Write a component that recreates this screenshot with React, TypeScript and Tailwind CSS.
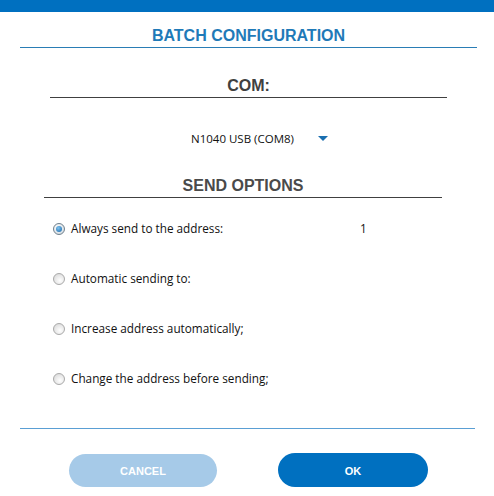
import React from "react";

const options = [
  { label: "Always send to the address:", checked: true, value: "1" },
  { label: "Automatic sending to:", checked: false },
  { label: "Increase address automatically;", checked: false },
  { label: "Change the address before sending;", checked: false },
];

function Radio({ checked }: { checked: boolean }) {
  if (checked) {
    return (
      <span className="flex h-[12px] w-[12px] items-center justify-center rounded-full border border-[#6f7f8c] bg-[radial-gradient(circle_at_40%_35%,#ffffff,#c9d3da)]">
        <span className="h-[6px] w-[6px] rounded-full bg-[radial-gradient(circle_at_40%_35%,#7fc3f0,#1565a8)]" />
      </span>
    );
  }
  return (
    <span className="h-[12px] w-[12px] rounded-full border border-[#a9a9a9] bg-[radial-gradient(circle_at_60%_65%,#ffffff,#d4d4d4)]" />
  );
}

export default function App() {
  return (
    <div className="flex h-[496px] w-[494px] flex-col bg-white font-['Liberation_Sans',Arial,sans-serif]">
      <div className="h-[12px] bg-[#0070c0]" />

      <div className="ml-[20px] mr-[17px] mt-[15px] border-b border-[#2a7db5] pb-[2px] text-center text-[16px] leading-[18px] font-bold text-[#1f7ab8]">
        BATCH CONFIGURATION
      </div>

      <div className="ml-[50px] mr-[47px] mt-[29px] border-b border-[#404040] pb-[2px] text-center text-[16px] leading-[18px] font-bold text-[#404040]">
        COM:
      </div>

      <div className="mt-[33px] flex h-[16px] items-center pl-[191px] font-['Open_Sans',sans-serif] text-[11.5px] text-[#111]">
        <span className="w-[127px]">N1040 USB (COM8)</span>
        <svg width="10" height="6" viewBox="0 0 10 6">
          <path d="M0 0 L10 0 L5 5 Z" fill="#1a6fb0" />
        </svg>
      </div>

      <div className="ml-[44px] mr-[52px] mt-[30px] border-b border-[#404040] pb-[2px] text-center text-[16px] leading-[18px] font-bold text-[#4a4a4a]">
        SEND OPTIONS
      </div>

      <div className="ml-[53px] mt-[23px] flex flex-col gap-[34px] font-['Open_Sans',sans-serif] text-[11.75px] text-[#111]">
        {options.map((o) => (
          <div key={o.label} className="flex h-[16px] items-center">
            <Radio checked={o.checked} />
            <span className="ml-[6px] w-[289px]">{o.label}</span>
            {o.value && <span>{o.value}</span>}
          </div>
        ))}
      </div>

      <div className="ml-[20px] mr-[19px] mt-[41px] border-b border-[#5a9fd4]" />

      <div className="mt-[24px] flex items-center pl-[69px]">
        <button className="h-[33px] w-[148px] rounded-full bg-[#a6cae8] pt-[2px] text-[11px] font-bold text-white">
          CANCEL
        </button>
        <button className="ml-[61px] h-[34px] w-[150px] rounded-full bg-[#0070c0] pt-[2px] text-[11px] font-bold text-white">
          OK
        </button>
      </div>
    </div>
  );
}
